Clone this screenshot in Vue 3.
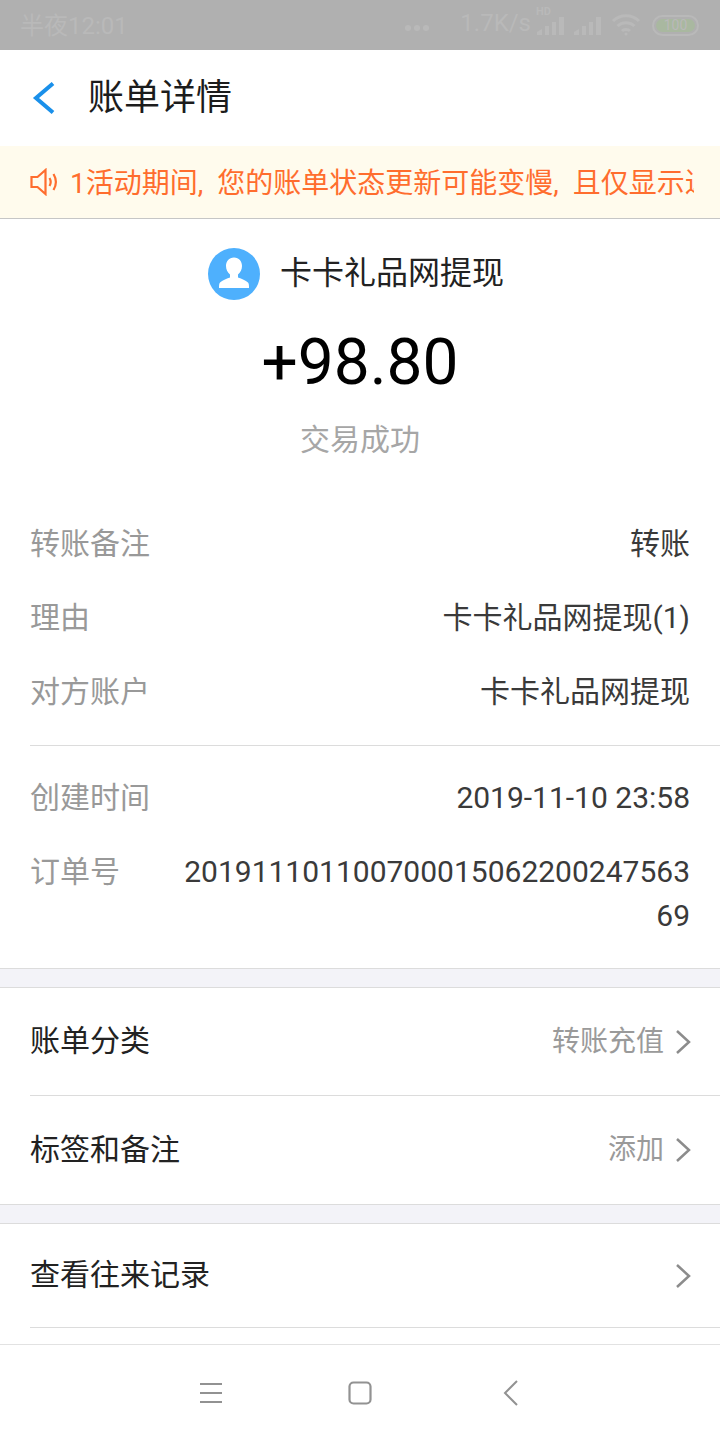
<template>
  <div class="page">
    <div class="statusbar">
      <span class="clock">半夜12:01</span>
      <div class="status-right">
        <span class="dots"><i></i><i></i><i></i></span>
        <span class="speed">1.7K/s</span>
        <div class="signal hd">
          <span class="hd-label">HD</span>
          <svg width="28" height="21" viewBox="0 0 28 21"><path d="M0 21v-3l5-3v6zM8 21v-9h4v9zM15 21V8h4v13zM22 21V3h5v18z" fill="#b9b9b9"/></svg>
        </div>
        <svg class="signal2" width="28" height="21" viewBox="0 0 28 21"><path d="M0 21v-3l5-3v6zM8 21v-9h4v9zM15 21V8h4v13zM22 21V3h5v18z" fill="#b9b9b9"/></svg>
        <svg class="wifi" width="30" height="24" viewBox="0 0 30 24" fill="none" stroke="#b9b9b9" stroke-width="3"><path d="M2 8c7-7 19-7 26 0M6.500 13c4.500-4.500 12.500-4.500 17 0"/><path d="M11 18c2-2 6-2 8 0"/><circle cx="15" cy="21" r="1.500" fill="#b9b9b9" stroke="none"/></svg>
        <div class="battery"><span>100</span></div>
      </div>
    </div>

    <header class="topbar">
      <svg class="back" width="24" height="32" viewBox="0 0 24 32" fill="none"><path d="M22 1.500 5 16l17 14.500" stroke="#1a90ea" stroke-width="4"/></svg>
      <h1>账单详情</h1>
    </header>

    <div class="notice">
      <svg class="horn" width="30" height="28" viewBox="0 0 30 28" fill="none" stroke="#ff6d2e" stroke-width="2.200"><path d="M1.500 9h6l8-7v24l-8-7h-6z"/><path d="M19.500 10c1.500 2.500 1.500 5.500 0 8M23.500 6c3 5 3 11 0 16"/></svg>
      <div class="notice-text">1活动期间, 您的账单状态更新可能变慢, 且仅显示近</div>
    </div>

    <main class="content">
      <section class="summary">
        <div class="merchant">
          <div class="avatar">
            <svg width="52" height="52" viewBox="0 0 52 52"><path d="M26 9.500c-5 0-8 3.800-8 8.500 0 3.500 1.500 6.500 4 8.500v3c-4 1.500-7.500 2.800-10 5-1 1-1 3-1 5.500h30c0-2.500 0-4.500-1-5.500-2.500-2.200-6-3.500-10-5v-3c2.500-2 4-5 4-8.500 0-4.700-3-8.500-8-8.500z" fill="#fff"/></svg>
          </div>
          <span class="merchant-name">卡卡礼品网提现</span>
        </div>
        <div class="amount">+98.80</div>
        <div class="result">交易成功</div>
      </section>

      <section class="details">
        <div v-for="row in infoRows" :key="row.label" class="info-row">
          <span class="label">{{ row.label }}</span>
          <span class="value">{{ row.value }}</span>
        </div>
      </section>
      <section class="details second">
        <div v-for="row in orderRows" :key="row.label" class="info-row">
          <span class="label">{{ row.label }}</span>
          <span class="value">{{ row.value }}</span>
        </div>
      </section>

      <div class="gap"></div>

      <section class="links">
        <div class="link-row first">
          <span class="name">账单分类</span>
          <span class="hint">转账充值</span>
          <svg class="arrow" width="16" height="26" viewBox="0 0 16 26" fill="none"><path d="M2 2l12 11L2 24" stroke="#8c8c8c" stroke-width="2.500"/></svg>
        </div>
        <div class="link-row">
          <span class="name">标签和备注</span>
          <span class="hint">添加</span>
          <svg class="arrow" width="16" height="26" viewBox="0 0 16 26" fill="none"><path d="M2 2l12 11L2 24" stroke="#8c8c8c" stroke-width="2.500"/></svg>
        </div>
      </section>

      <div class="gap"></div>

      <section class="links">
        <div class="link-row short">
          <span class="name">查看往来记录</span>
          <svg class="arrow" width="16" height="26" viewBox="0 0 16 26" fill="none"><path d="M2 2l12 11L2 24" stroke="#8c8c8c" stroke-width="2.500"/></svg>
        </div>
      </section>
    </main>

    <nav class="navbar">
      <svg width="24" height="24" viewBox="0 0 24 24" fill="none" stroke="#929292" stroke-width="2"><path d="M1 3h22M1 12h22M1 21h22"/></svg>
      <svg class="home" width="24" height="24" viewBox="0 0 24 24" fill="none" stroke="#929292" stroke-width="2.200"><rect x="1.500" y="1.500" width="21" height="21" rx="4"/></svg>
      <svg class="nav-back" width="16" height="26" viewBox="0 0 16 26" fill="none" stroke="#929292" stroke-width="2"><path d="M14 1 2 13l12 12"/></svg>
    </nav>
  </div>
</template>

<script setup>
const infoRows = [
  { label: '转账备注', value: '转账' },
  { label: '理由', value: '卡卡礼品网提现(1)' },
  { label: '对方账户', value: '卡卡礼品网提现' }
]

const orderRows = [
  { label: '创建时间', value: '2019-11-10 23:58' },
  { label: '订单号', value: '20191110110070001506220024756369' }
]
</script>

<style>
body {
  background: #fff;
}
</style>

<style scoped>
.page {
  display: flex;
  flex-direction: column;
  width: 720px;
  height: 1440px;
  overflow: hidden;
  background: #fff;
  font-family: Roboto, "Noto Sans CJK SC", sans-serif;
  color: #222;
}

.statusbar {
  flex: none;
  display: flex;
  align-items: center;
  justify-content: space-between;
  height: 50px;
  padding: 0 21px 0 20px;
  box-sizing: border-box;
  background: #b0b0b0;
  color: #b9b9b9;
}

.clock {
  font-size: 24px;
  padding-bottom: 4px;
}

.status-right {
  display: flex;
  align-items: center;
}

.dots {
  display: flex;
  gap: 3px;
  margin-right: 31px;
  margin-top: 6px;
}

.dots i {
  width: 6px;
  height: 6px;
  border-radius: 50%;
  background: #b9b9b9;
}

.speed {
  font-size: 24px;
  margin-right: 6px;
  padding-bottom: 4px;
}

.signal {
  position: relative;
  height: 21px;
  margin-top: -2px;
}

.hd-label {
  position: absolute;
  left: -1px;
  top: -9px;
  font-size: 11px;
  font-weight: 700;
}

.signal2 {
  margin-left: 9px;
  margin-top: -2px;
}

.wifi {
  margin-left: 9px;
  margin-top: -1px;
}

.battery {
  display: flex;
  align-items: center;
  justify-content: center;
  width: 47px;
  height: 21px;
  margin-left: 11px;
  box-sizing: border-box;
  border: 2px solid #b9b9b9;
  border-radius: 11px;
  background: #a9b8a0;
  background-clip: content-box;
  padding: 2px;
  font-size: 14px;
}

.topbar {
  flex: none;
  display: flex;
  align-items: center;
  height: 96px;
  padding-left: 31px;
}

.back {
  margin-right: 34px;
}

.topbar h1 {
  margin: 0 0 8px -1px;
  font-size: 36px;
  font-weight: 400;
  color: #1c1c1c;
}

.notice {
  flex: none;
  display: flex;
  align-items: center;
  height: 73px;
  padding-left: 30px;
  padding-right: 26px;
  box-sizing: border-box;
  background: #fffbed;
  border-bottom: 1px solid #c6c6c6;
}

.horn {
  flex: none;
  margin-right: 10px;
}

.notice-text {
  flex: 1;
  overflow: hidden;
  white-space: nowrap;
  word-spacing: 7px;
  font-size: 28px;
  padding-bottom: 2px;
  color: #ff6d2e;
}

.content {
  flex: 1;
  min-height: 0;
  overflow: hidden;
}

.summary {
  display: flex;
  flex-direction: column;
  align-items: center;
  padding-top: 28px;
}

.merchant {
  display: flex;
  align-items: center;
  gap: 20px;
  padding-right: 8px;
  font-size: 32px;
  color: #222;
}

.merchant-name {
  padding-bottom: 8px;
}

.avatar {
  width: 52px;
  height: 52px;
  border-radius: 50%;
  background: #4eb0fd;
  overflow: hidden;
}

.avatar svg {
  display: block;
}

.amount {
  margin-top: 16px;
  font-size: 64px;
  line-height: 92px;
  color: #000;
}

.result {
  margin-top: 9px;
  font-size: 30px;
  line-height: 44px;
  color: #a6a6a6;
}

.details {
  margin-top: 45px;
  margin-left: 30px;
  padding-right: 30px;
  padding-bottom: 16px;
}

.details.second {
  margin-top: 0;
  padding-top: 15px;
  padding-bottom: 15px;
  border-top: 1px solid #dcdcdc;
}

.info-row {
  display: flex;
  justify-content: space-between;
  padding: 15px 0;
  font-size: 30px;
  line-height: 44px;
}

.label {
  flex: none;
  color: #999;
}

.value {
  max-width: 510px;
  color: #3a3a3a;
  text-align: right;
  word-break: break-all;
}

.gap {
  height: 18px;
  background: #f3f3f8;
  border-top: 1px solid #dcdcdc;
  border-bottom: 1px solid #dcdcdc;
}

.links {
  padding-left: 30px;
}

.link-row {
  display: flex;
  align-items: center;
  height: 109px;
  padding-right: 29px;
  box-sizing: border-box;
  border-top: 1px solid #dcdcdc;
  font-size: 30px;
  color: #222;
}

.link-row.first {
  height: 107px;
  border-top: 0;
}

.link-row.short {
  height: 104px;
  border-top: 0;
  border-bottom: 1px solid #dcdcdc;
}

.name {
  flex: 1;
  padding-bottom: 7px;
}

.hint {
  margin-right: 11px;
  padding-bottom: 6px;
  font-size: 28px;
  color: #9a9a9a;
}

.arrow {
  flex: none;
}

.navbar {
  flex: none;
  display: flex;
  align-items: center;
  height: 96px;
  padding-left: 199px;
  box-sizing: border-box;
  border-top: 1px solid #e2e2e2;
  background: #fff;
}

.home {
  margin-left: 125px;
}

.nav-back {
  margin-left: 131px;
}
</style>
